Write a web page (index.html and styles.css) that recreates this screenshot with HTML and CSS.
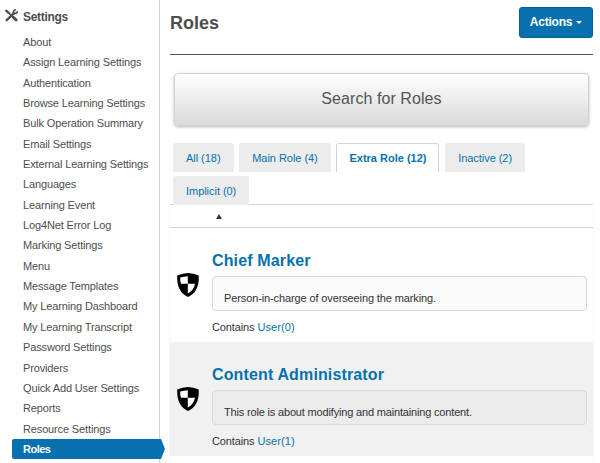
FILE: index.html
```html
<!DOCTYPE html>
<html lang="en">
<head>
<meta charset="utf-8">
<title>Roles</title>
<link rel="stylesheet" href="styles.css">
</head>
<body>
<div class="page">
  <nav class="sidebar">
    <h2 class="side-title">
      <svg class="tools" width="13" height="13" viewBox="0 0 13 13" fill="none" stroke="#4d4d4f" stroke-linecap="round"><path d="M1.700 11.200 9 4.200" stroke-width="2.300"/><path d="M10.200.800Q8 1.600 8.400 4.400 11.200 5 12.200 2.800" stroke-width="1.700"/><path d="M1.400 1.900 7 7.200" stroke-width="1.600"/><path d="M1.300 1.800 3.400 3.600" stroke-width="2.400"/><path d="M8.300 8.300 11 10.900" stroke-width="2.900"/></svg>
      <span>Settings</span>
    </h2>
    <ul class="menu">
      <li>About</li>
      <li>Assign Learning Settings</li>
      <li>Authentication</li>
      <li>Browse Learning Settings</li>
      <li>Bulk Operation Summary</li>
      <li>Email Settings</li>
      <li>External Learning Settings</li>
      <li>Languages</li>
      <li>Learning Event</li>
      <li>Log4Net Error Log</li>
      <li>Marking Settings</li>
      <li>Menu</li>
      <li>Message Templates</li>
      <li>My Learning Dashboard</li>
      <li>My Learning Transcript</li>
      <li>Password Settings</li>
      <li>Providers</li>
      <li>Quick Add User Settings</li>
      <li>Reports</li>
      <li>Resource Settings</li>
      <li class="active">Roles</li>
    </ul>
  </nav>
  <main class="content">
    <header class="head">
      <h1>Roles</h1>
      <button class="actions"><span>Actions</span><i class="caret"></i></button>
    </header>
    <button class="search">Search for Roles</button>
    <div class="tabs">
      <a class="tab">All (18)</a>
      <a class="tab">Main Role (4)</a>
      <a class="tab current">Extra Role (12)</a>
      <a class="tab">Inactive (2)</a>
      <a class="tab">Implicit (0)</a>
    </div>
    <section class="list">
      <div class="sort"><i class="asc"></i></div>
      <article class="role">
        <svg class="shield" width="22" height="24" viewBox="0 0 22 24"><path d="M11 0Q5.500 0 .300 2.500C-.300 12 2.500 20 11 24 19.500 20 22.300 12 21.700 2.500Q16.500 0 11 0Z"/><path fill="#fff" d="M10.800 3.300Q7 3.400 3.200 4.600 3.100 8 3.900 10.800H10.800ZM10.800 10.800H18Q16.700 17.500 10.800 20.400Z"/></svg>
        <div class="info">
          <h3>Chief Marker</h3>
          <p class="desc">Person-in-charge of overseeing the marking.</p>
          <p class="contains">Contains <a>User(0)</a></p>
        </div>
      </article>
      <article class="role alt">
        <svg class="shield" width="22" height="24" viewBox="0 0 22 24"><path d="M11 0Q5.500 0 .300 2.500C-.300 12 2.500 20 11 24 19.500 20 22.300 12 21.700 2.500Q16.500 0 11 0Z"/><path fill="#fff" d="M10.800 3.300Q7 3.400 3.200 4.600 3.100 8 3.900 10.800H10.800ZM10.800 10.800H18Q16.700 17.500 10.800 20.400Z"/></svg>
        <div class="info">
          <h3>Content Administrator</h3>
          <p class="desc">This role is about modifying and maintaining content.</p>
          <p class="contains">Contains <a>User(1)</a></p>
        </div>
      </article>
    </section>
  </main>
</div>
</body>
</html>
```
FILE: styles.css
```css
* { box-sizing: border-box; }
body { margin: 0; background: #fff; font: 11px/20px "Liberation Sans", Arial, sans-serif; color: #333; }
h1, h2, h3, p, ul { margin: 0; padding: 0; }
.page { display: flex; height: 463px; overflow: hidden; }
.sidebar { width: 160px; flex: none; border-right: 1px solid #d4d4d4; color: #4d4d4f; }
.side-title { display: flex; height: 32px; padding: 9px 0 0 5px; font-size: 12px; line-height: 16px; letter-spacing: -0.3px; }
.tools { margin-right: 5px; }
.menu { list-style: none; letter-spacing: -0.14px; }
.menu li { height: 20.35px; padding-left: 23px; white-space: nowrap; }
.menu .active { width: 153px; height: 20px; margin-left: 12px; padding-left: 11px; position: relative; background: #0671ae; color: #fff; font-weight: bold; letter-spacing: -0.5px; border-radius: 2px 0 0 2px; clip-path: polygon(0 0, 149px 0, 100% 50%, 149px 100%, 0 100%); }
.content { width: 423px; margin-left: 10px; flex: none; }
.head { display: flex; justify-content: space-between; height: 55px; padding-top: 7px; border-bottom: 1px solid #555; }
h1 { font-size: 18px; line-height: 32px; color: #4d4d4f; }
.actions { display: flex; align-items: center; justify-content: center; gap: 4px; width: 74px; height: 31px; padding: 0 0 2px; border: 1px solid #055d92; border-radius: 3px; background: #0671ae; color: #fff; font: bold 12px "Liberation Sans", Arial, sans-serif; letter-spacing: -0.2px; }
.caret { border: 3px solid transparent; border-top-color: #fff; border-bottom: 0; margin-top: 2px; }
.search { display: block; width: 415px; height: 53px; margin: 18px 0 0 4px; padding: 0 0 2px; border: 1px solid #d3d3d3; border-radius: 4px; background: linear-gradient(#fff, #d9d9d9); box-shadow: 0 1px 3px rgba(0,0,0,.3); color: #555; font: 16px "Liberation Sans", Arial, sans-serif; letter-spacing: 0.07px; }
.tabs { display: flex; flex-wrap: wrap; gap: 4px 5.7px; height: 79px; padding: 17px 3px 0; border-bottom: 1px solid #d3d3d3; align-content: flex-start; }
.tab { height: 29px; padding: 0 13px; border-radius: 3px 3px 0 0; background: #ececec; color: #0671ae; line-height: 30px; letter-spacing: -0.04px; }
.tab.current { background: #fff; padding: 0 12px; border: 1px solid #d3d3d3; border-bottom: 0; font-weight: bold; line-height: 28px; letter-spacing: 0; }
.list { height: 258px; box-shadow: -1px 0 #f8f8f8, 1px 0 #f8f8f8; }
.sort { height: 23px; border-bottom: 1px solid #d3d3d3; padding: 9px 0 0 46px; }
.asc { display: block; width: 6px; height: 5px; background: #333; clip-path: polygon(50% 0, 100% 100%, 0 100%); }
.role { display: flex; height: 114px; padding: 21px 6px 0 6px; }
.alt { background: #f1f1f1; }
.shield { margin: 24px 13px 0 1px; flex: none; }
.info { flex: 1; }
h3 { font-size: 16px; line-height: 24px; letter-spacing: 0.14px; color: #0671ae; }
.desc { height: 35px; margin-top: 3px; padding: 5px 11px 0; border: 1px solid #d8d8d8; border-radius: 4px; background: #fafafa; line-height: 32px; letter-spacing: -0.12px; }
.alt .desc { background: #ebebeb; letter-spacing: -0.17px; }
.contains { line-height: 32px; letter-spacing: -0.12px; }
.contains a { color: #0671ae; letter-spacing: 0.1px; }
```
